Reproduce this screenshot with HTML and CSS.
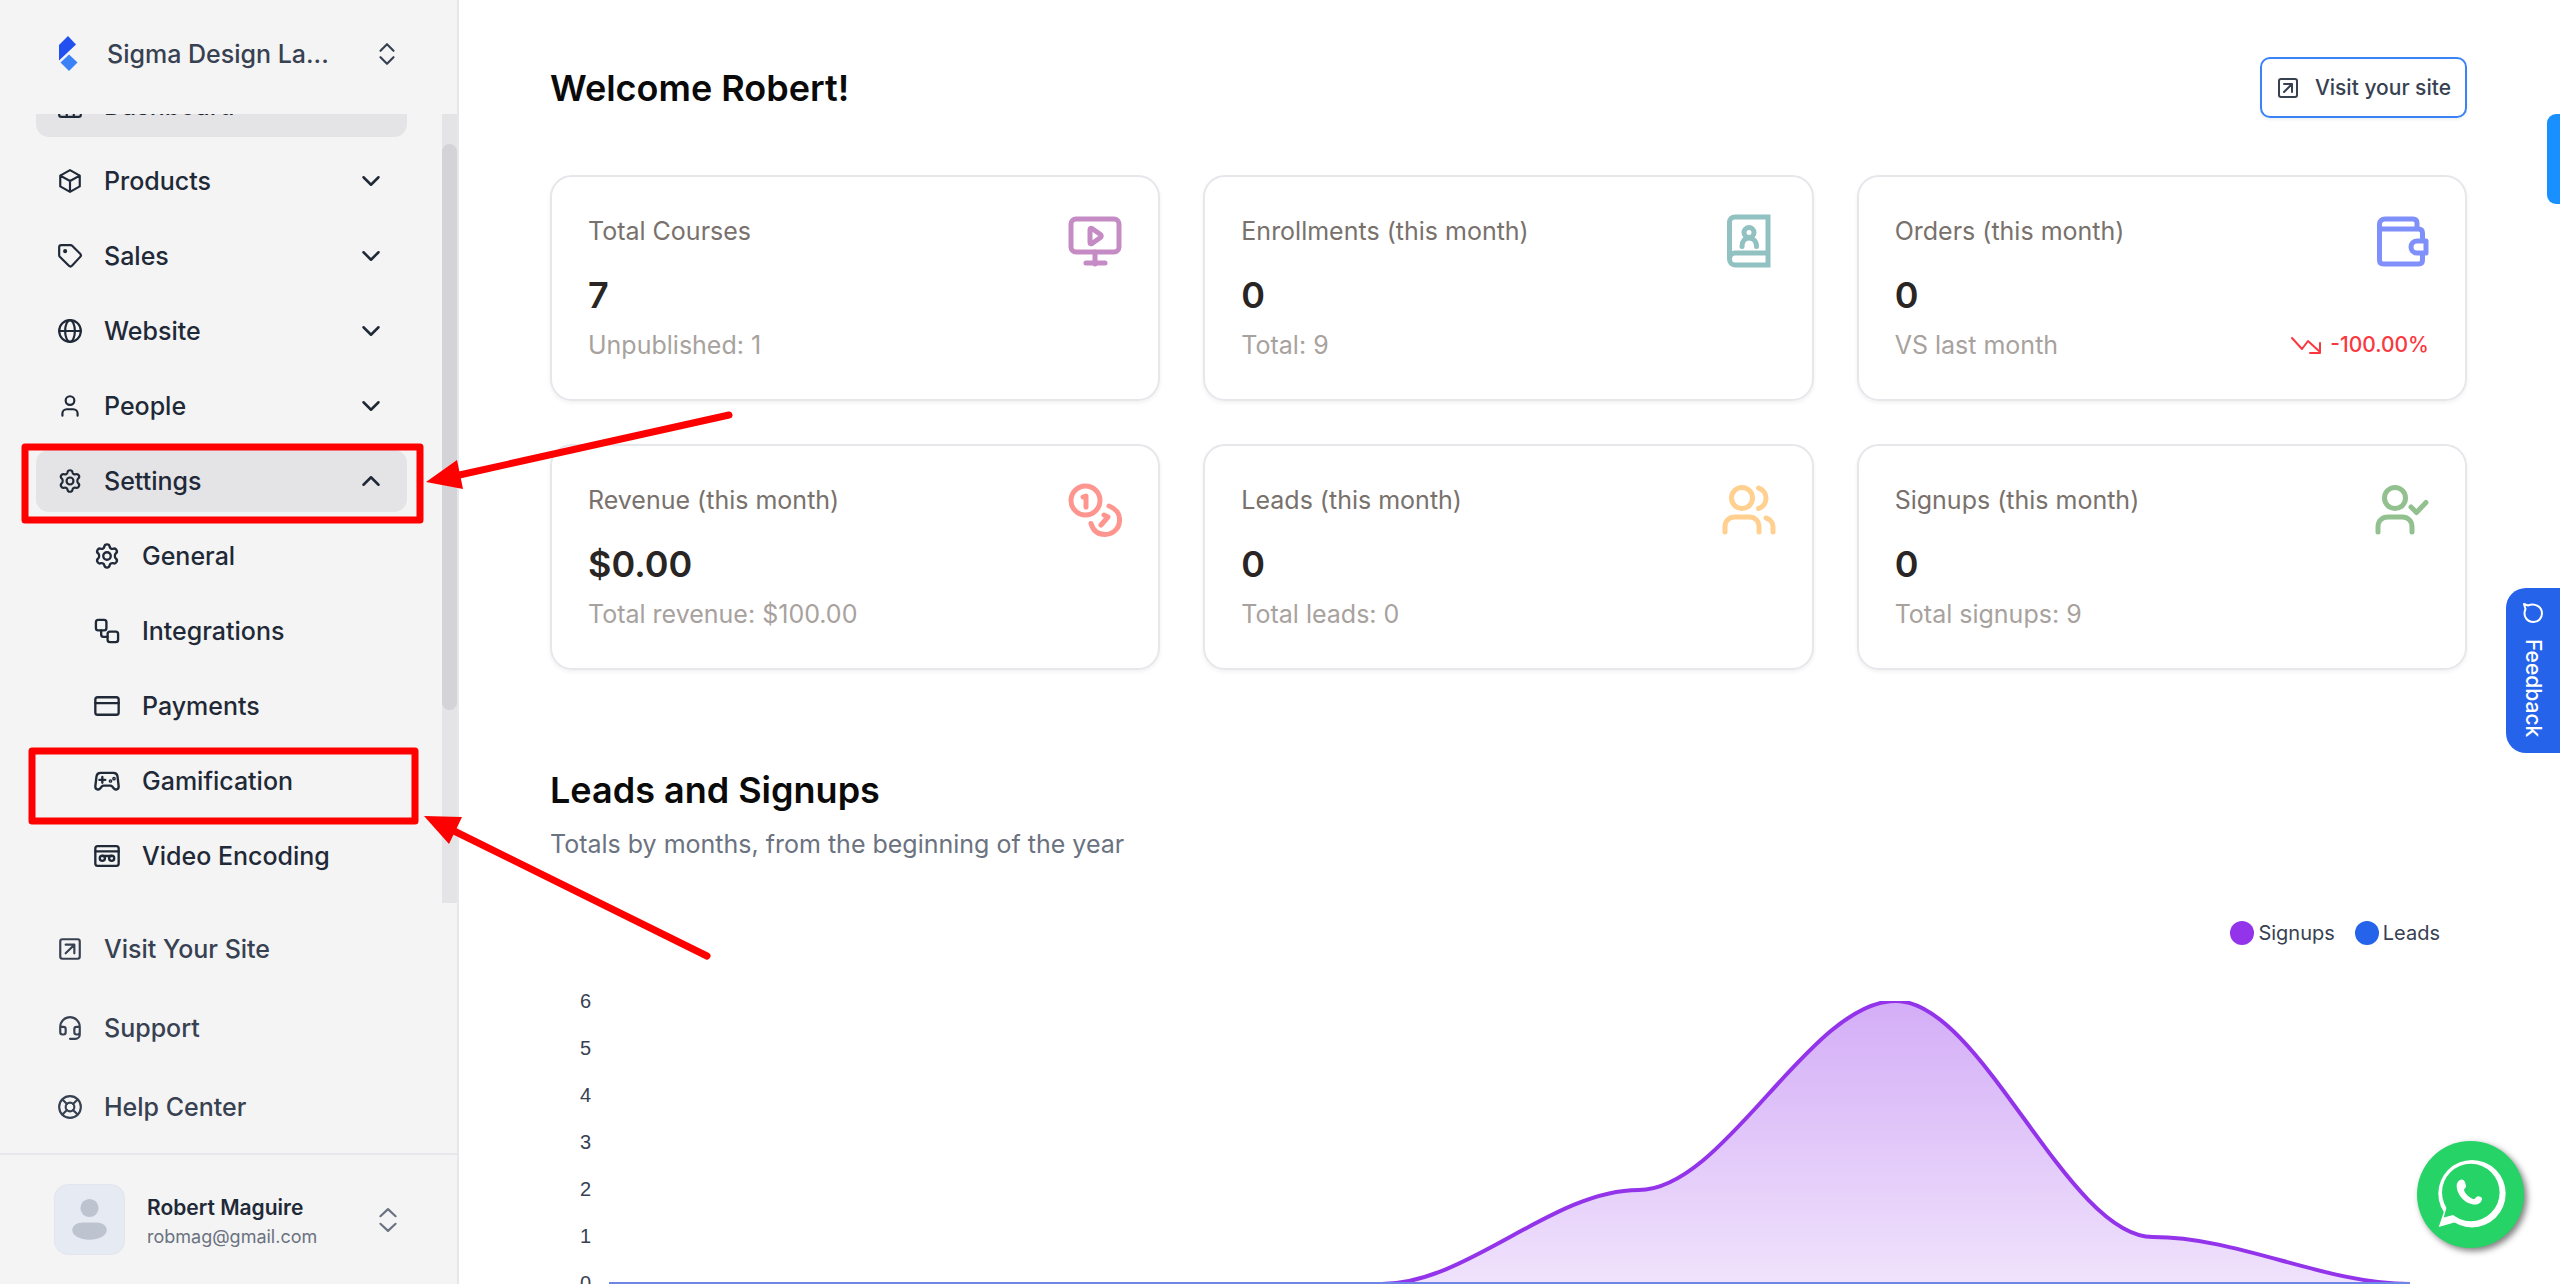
FILE: index.html
```
<!DOCTYPE html>
<html lang="en">
<head>
    <meta charset="UTF-8">
    <meta name="viewport" content="width=device-width, initial-scale=1.0">
    <title>Dashboard</title>
    <link rel="stylesheet" href="styles.css">
</head>
<body>
  <aside class="sidebar">
    <button class="workspace" type="button">
      <svg class="logo" viewBox="0 0 20 36">
        <path fill="#2250f0" d="M10 0l8 8.500L1 24.500V9z"/>
        <path fill="#3b82f6" d="M11 18.500l8.500 8L11 35l-8.500-8.500z"/>
      </svg>
      <span class="workspace-name">Sigma Design La...</span>
      <svg class="icon" viewBox="0 0 24 24"><path d="M6 9l6-6 6 6M6 15l6 6 6-6"/></svg>
    </button>

    <nav class="nav">
      <ul class="menu">
        <li><a class="item active" href="#">
          <svg class="icon" viewBox="0 0 24 24"><rect x="2" y="3" width="20" height="19" rx="2"/><path d="M2 9h20M9 9v13M15.500 9v13"/></svg>
          <span>Dashboard</span></a></li>
        <li><button class="item" type="button">
          <svg class="icon" viewBox="0 0 24 24"><path d="M12 2l9 5v10l-9 5-9-5V7zM3 7l9 5 9-5M12 12v10"/></svg>
          <span>Products</span>
          <svg class="chevron" viewBox="0 0 24 24"><path d="M6 9l6 6 6-6"/></svg></button></li>
        <li><button class="item" type="button">
          <svg class="icon" viewBox="0 0 24 24"><path d="M4 2h8.500c.6 0 1.100.2 1.500.6l7.400 7.400c.8.8.8 2 0 2.800l-7.600 8.200c-.8.8-2 .8-2.800 0l-8.400-8.400c-.4-.4-.6-.9-.6-1.400V4c0-1.100.9-2 2-2z"/><circle cx="7.500" cy="7.500" r=".9" fill="currentColor"/></svg>
          <span>Sales</span>
          <svg class="chevron" viewBox="0 0 24 24"><path d="M6 9l6 6 6-6"/></svg></button></li>
        <li><button class="item" type="button">
          <svg class="icon" viewBox="0 0 24 24"><circle cx="12" cy="12" r="10"/><ellipse cx="12" cy="12" rx="4.500" ry="10"/><path d="M2 12h20"/></svg>
          <span>Website</span>
          <svg class="chevron" viewBox="0 0 24 24"><path d="M6 9l6 6 6-6"/></svg></button></li>
        <li><button class="item" type="button">
          <svg class="icon" viewBox="0 0 24 24"><circle cx="12" cy="7" r="4"/><path d="M5 21v-2a4 4 0 0 1 4-4h6a4 4 0 0 1 4 4v2"/></svg>
          <span>People</span>
          <svg class="chevron" viewBox="0 0 24 24"><path d="M6 9l6 6 6-6"/></svg></button></li>
        <li><button class="item active" type="button" aria-expanded="true">
          <svg class="icon" viewBox="0 0 24 24"><path d="M9.700 4.100c.3-2.700 4.300-2.700 4.600 0 .2 1.300 1.600 2.100 2.900 1.700 2.600-1 4.500 2.400 2.300 4-1 .8-1 3.400 0 4.200 2.200 1.700.3 5.200-2.300 4.200-1.300-.4-2.700.4-2.900 1.700-.3 2.700-4.300 2.700-4.600 0-.2-1.300-1.600-2.100-2.900-1.700-2.600 1-4.500-2.500-2.300-4.200 1-.8 1-3.400 0-4.200-2.200-1.600-.3-5 2.300-4 1.300.4 2.700-.4 2.900-1.700z"/><circle cx="12" cy="12" r="3.200"/></svg>
          <span>Settings</span>
          <svg class="chevron" viewBox="0 0 24 24"><path d="M6 15l6-6 6 6"/></svg></button></li>
        <li><a class="item sub" href="#">
          <svg class="icon" viewBox="0 0 24 24"><path d="M9.700 4.100c.3-2.700 4.300-2.700 4.600 0 .2 1.300 1.600 2.100 2.900 1.700 2.600-1 4.500 2.400 2.300 4-1 .8-1 3.400 0 4.200 2.200 1.700.3 5.200-2.300 4.200-1.300-.4-2.700.4-2.900 1.700-.3 2.700-4.300 2.700-4.600 0-.2-1.300-1.600-2.100-2.900-1.700-2.600 1-4.500-2.500-2.300-4.200 1-.8 1-3.400 0-4.200-2.200-1.600-.3-5 2.300-4 1.300.4 2.700-.4 2.900-1.700z"/><circle cx="12" cy="12" r="3.200"/></svg>
          <span>General</span></a></li>
        <li><a class="item sub" href="#">
          <svg class="icon" viewBox="0 0 24 24"><rect x="2.500" y="2.500" width="9" height="9" rx="2"/><rect x="12.500" y="12.500" width="9" height="9" rx="2"/><path d="M7 11.500V15a2 2 0 0 0 2 2h3.500"/></svg>
          <span>Integrations</span></a></li>
        <li><a class="item sub" href="#">
          <svg class="icon" viewBox="0 0 24 24"><rect x="2" y="4.500" width="20" height="15" rx="2"/><path d="M2 9.500h20"/></svg>
          <span>Payments</span></a></li>
        <li><a class="item sub" href="#">
          <svg class="icon" viewBox="0 0 24 24"><path d="M6.500 5h11c2 0 3.200 1 3.500 3l1 8.500c.2 3-3 3.600-4.500 1.500l-1-1.200c-.5-.6-1-.8-1.700-.8H9.200c-.7 0-1.200.2-1.700.8l-1 1.200C5 20.100 1.800 19.500 2 16.500L3 8c.3-2 1.500-3 3.500-3zM8 8.500v5M5.500 11h5"/><circle cx="15" cy="12" r=".6"/><circle cx="18" cy="10" r=".6"/></svg>
          <span>Gamification</span></a></li>
        <li><a class="item sub" href="#">
          <svg class="icon" viewBox="0 0 24 24"><rect x="2" y="3.500" width="20" height="17" rx="2"/><path d="M2 8h20M8 12h8"/><circle cx="8" cy="14" r="2.200"/><circle cx="16" cy="14" r="2.200"/></svg>
          <span>Video Encoding</span></a></li>
      </ul>
      <div class="track"><div class="thumb"></div></div>
    </nav>

    <ul class="links">
      <li><a class="item" href="#">
        <svg class="icon" viewBox="0 0 24 24"><rect x="3" y="3" width="18" height="18" rx="2"/><path d="M8 8h8v8M16 8l-8 8"/></svg>
        <span>Visit Your Site</span></a></li>
      <li><a class="item" href="#">
        <svg class="icon" viewBox="0 0 24 24"><path d="M3 11h3a2 2 0 0 1 2 2v3a2 2 0 0 1-2 2H5a2 2 0 0 1-2-2v-5a9 9 0 0 1 18 0v5a2 2 0 0 1-2 2h-1a2 2 0 0 1-2-2v-3a2 2 0 0 1 2-2h3M21 16v2a4 4 0 0 1-4 4h-5"/></svg>
        <span>Support</span></a></li>
      <li><a class="item" href="#">
        <svg class="icon" viewBox="0 0 24 24"><circle cx="12" cy="12" r="10"/><circle cx="12" cy="12" r="4"/><path d="M5 5l4.200 4.200M14.800 9.200L19 5M14.800 14.800L19 19M9.200 14.800L5 19"/></svg>
        <span>Help Center</span></a></li>
    </ul>

    <button class="user" type="button">
      <svg class="avatar" viewBox="0 0 72 72">
        <circle cx="36" cy="24" r="9.500"/>
        <path d="M29 39h14c6 0 11 3 11 8 0 6-8 10-18 10s-18-4-18-10c0-5 5-8 11-8z"/>
      </svg>
      <span class="user-text">
        <span class="user-name">Robert Maguire</span>
        <span class="user-mail">robmag@gmail.com</span>
      </span>
      <svg class="icon" viewBox="0 0 24 24"><path d="M5 8.500L12 2l7 6.500M5 15.500l7 6.500 7-6.500"/></svg>
    </button>
  </aside>

  <main class="main">
    <header class="top">
      <h1>Welcome Robert!</h1>
      <a class="visit" href="#">
        <svg class="icon" viewBox="0 0 24 24"><rect x="3" y="3" width="18" height="18" rx="2"/><path d="M8 8h8v8M16 8l-8 8"/></svg>
        <span>Visit your site</span>
      </a>
    </header>

    <section class="cards">
      <article class="card">
        <div class="card-top">
          <h2>Total Courses</h2>
          <svg class="big purple" viewBox="0 0 54 54"><rect x="3" y="5" width="48" height="33" rx="5"/><path d="M27 38v12M18 49h19M22 15.500v13c0 1.500 1 1.500 2 1l8.500-6c1-1 1-2 0-3l-8.500-6c-1-.5-2-.5-2 1z"/></svg>
        </div>
        <strong>7</strong>
        <p>Unpublished: 1</p>
      </article>
      <article class="card">
        <div class="card-top">
          <h2>Enrollments (this month)</h2>
          <svg class="big teal" viewBox="0 0 54 54"><path d="M46 3H13c-3 0-5.500 2-5.500 5v37c0 3.500 2.500 6 5.500 6h33zM46 39H13c-3 0-5.500 2.500-5.500 6"/><circle cx="27" cy="18.500" r="5"/><path d="M20 32.500c0-5.500 3-8.500 7-8.500s7.500 3 7.500 8.500"/></svg>
        </div>
        <strong>0</strong>
        <p>Total: 9</p>
      </article>
      <article class="card">
        <div class="card-top">
          <h2>Orders (this month)</h2>
          <svg class="big indigo" viewBox="0 0 54 54"><path d="M42 15V9c0-2.500-1.500-4-4-4H10C7 5 4.500 7 4.500 10v36c0 2.500 1.500 4 4 4h35c2.500 0 4-1.500 4-4v-6M47.500 27v-8c0-2.500-1.500-4-4-4H5M51 27h-9c-8 0-8 12 0 12h9z"/></svg>
        </div>
        <strong>0</strong>
        <div class="card-foot">
          <p>VS last month</p>
          <span class="trend">
            <svg viewBox="0 0 30 18"><path d="M1 2l10 11 6-8 12 11M19 17h10V7"/></svg>
            -100.00%
          </span>
        </div>
      </article>
      <article class="card">
        <div class="card-top">
          <h2>Revenue (this month)</h2>
          <svg class="big coral" viewBox="0 0 54 54"><circle cx="17.500" cy="17.500" r="14.500"/><path d="M41 23c7 2.500 11 8 10.500 15-.5 8-7 13.500-14.500 13.500-7 0-12-4-14-11M15 14l3-1v11M36 32l4 2-7 8"/></svg>
        </div>
        <strong>$0.00</strong>
        <p>Total revenue: $100.00</p>
      </article>
      <article class="card">
        <div class="card-top">
          <h2>Leads (this month)</h2>
          <svg class="big orange" viewBox="0 0 54 54"><circle cx="20" cy="15" r="10.500"/><path d="M3 49v-5c0-6 4-10 10-10h14c6 0 10 4 10 10v5M36.500 5c10 3 10 17.500 0 20.500M44 35c4 1 7 4.500 7 9v5"/></svg>
        </div>
        <strong>0</strong>
        <p>Total leads: 0</p>
      </article>
      <article class="card">
        <div class="card-top">
          <h2>Signups (this month)</h2>
          <svg class="big green" viewBox="0 0 54 54"><circle cx="20" cy="15" r="10.500"/><path d="M3 49v-5c0-6 4-10 10-10h14c6 0 10 4 10 10v5M36 24l5.500 5.500L51 19.500"/></svg>
        </div>
        <strong>0</strong>
        <p>Total signups: 9</p>
      </article>
    </section>

    <section class="report">
      <h2>Leads and Signups</h2>
      <p>Totals by months, from the beginning of the year</p>
      <div class="legend">
        <span class="key signups">Signups</span>
        <span class="key leads">Leads</span>
      </div>
      <div class="chart">
        <div class="axis">
          <span>6</span><span>5</span><span>4</span><span>3</span><span>2</span><span>1</span><span>0</span>
        </div>
        <svg class="plot" viewBox="0 0 1800 283" preserveAspectRatio="none">
          <defs>
            <linearGradient id="fade" x1="0" y1="0" x2="0" y2="1">
              <stop offset="0" stop-color="#9333ea" stop-opacity=".4"/>
              <stop offset="1" stop-color="#9333ea" stop-opacity=".14"/>
            </linearGradient>
          </defs>
          <path fill="url(#fade)" d="M772 283C858 283 943 189 1029 189C1115 189 1200 0 1286 0C1372 0 1457 236 1543 236C1629 236 1714 283 1800 283z"/>
          <path class="line" stroke="#9333ea" d="M0 283H772C858 283 943 189 1029 189C1115 189 1200 0 1286 0C1372 0 1457 236 1543 236C1629 236 1714 283 1800 283"/>
          <path class="line" stroke="#6f86e6" d="M0 283H1800"/>
        </svg>
      </div>
    </section>
  </main>

  <button class="tab" type="button" aria-label="Open panel"></button>
  <button class="feedback" type="button">
    <svg viewBox="0 0 20 20"><path d="M1 1l4 1.500C12-.5 19 4 19 10.500 19 15 15.500 19 10.500 19 4 19-.5 13 2.500 6z"/></svg>
    <span>Feedback</span>
  </button>
  <a class="whatsapp" href="#" aria-label="WhatsApp">
    <svg viewBox="0 0 107 107">
      <circle cx="55" cy="52.700" r="33.700" fill="#fff"/>
      <path fill="#fff" d="M24 65l3.500 4L21.700 86l17.300-5 6-8z"/>
      <circle cx="53.800" cy="51.500" r="28.800" fill="#25d366"/>
      <path fill="#25d366" d="M29.700 66l-3 10.500L38 73.500z"/>
      <path fill="#fff" d="M45 38.500c-3 0-5.500 3-5.300 7 .3 9 9.500 18 18 18 4 0 7-2 7.300-5.500 0-2-2-2.600-4-2.800-2 0-2.500 3-4.500 3-4-1.500-8-5-9.500-9 0-2 2-2 2-4-.3-3-1.500-6.500-4-6.700z"/>
    </svg>
  </a>

  <!-- callouts over the menu -->
  <svg class="callouts" viewBox="0 0 760 1000" fill="none" stroke="#f00" stroke-width="7" stroke-linecap="round" stroke-linejoin="round">
    <rect x="25" y="447" width="395" height="73"/>
    <rect x="32" y="751" width="383" height="70"/>
    <path d="M729 415L455 476M707 956L450 829"/>
    <path fill="#f00" stroke="none" d="M426 482l31-22 6 29zM424 816l38 1-13 27z"/>
  </svg>
</body>
</html>
```
FILE: styles.css
```
* {
  box-sizing: border-box;
}

body {
  margin: 0;
  height: 100vh;
  display: flex;
  overflow: hidden;
  background: #fff;
  font-family: Inter, "Liberation Sans", sans-serif;
  font-size: 25px;
  line-height: 36px;
  color: #1f2937;
}

h1, h2, p, ul {
  margin: 0;
  padding: 0;
}

ul {
  list-style: none;
}

button {
  border: none;
  background: none;
  padding: 0;
  font: inherit;
  color: inherit;
  text-align: left;
}

a {
  color: inherit;
  text-decoration: none;
}

svg {
  flex: none;
  fill: none;
  stroke-linecap: round;
  stroke-linejoin: round;
}

.icon {
  width: 26px;
  height: 26px;
  stroke: currentColor;
  stroke-width: 2;
}

/* sidebar */
.sidebar {
  width: 459px;
  flex: none;
  display: flex;
  flex-direction: column;
  background: #f4f4f4;
  border-right: 2px solid #e5e7eb;
  font-weight: 500;
}

.workspace {
  height: 114px;
  padding: 0 57px 7px 58px;
  display: flex;
  align-items: center;
  color: #374151;
}

.logo {
  width: 20px;
  height: 36px;
  stroke: none;
}

.workspace-name {
  flex: 1;
  padding-left: 29px;
}

.nav {
  flex: 1;
  min-height: 0;
  display: flex;
  overflow: hidden;
}

.menu {
  flex: 1;
  display: flex;
  flex-direction: column;
  gap: 13px;
  margin-top: -39px;
  padding: 0 35px 0 36px;
}

.item {
  width: 100%;
  height: 62px;
  display: flex;
  align-items: center;
  gap: 21px;
  padding: 0 21px;
  border-radius: 13px;
}

.item.active {
  background: #e4e4e6;
}

.item.sub {
  padding-left: 57px;
}

.sub .icon {
  width: 28px;
  height: 28px;
}

.chevron {
  width: 30px;
  height: 30px;
  margin-left: auto;
  stroke: currentColor;
  stroke-width: 2;
}

.track {
  width: 15px;
  padding-top: 30px;
  background: #e4e4e6;
}

.thumb {
  height: 566px;
  border-radius: 8px;
  background: #d3d3d8;
}

.links {
  display: flex;
  flex-direction: column;
  gap: 17px;
  padding: 15px 50px 15px 36px;
  color: #374151;
}

.user {
  height: 131px;
  display: flex;
  align-items: center;
  gap: 22px;
  padding: 0 56px 0 54px;
  border-top: 2px solid #e5e7eb;
  color: #6b7280;
}

.avatar {
  width: 71px;
  height: 71px;
  border-radius: 14px;
  border: 1px solid #e2e5ec;
  background: #e6eaf3;
  fill: #bdc3cf;
}

.user-text {
  flex: 1;
  display: flex;
  flex-direction: column;
  padding-top: 4px;
  line-height: 29px;
}

.user-name {
  font-size: 21px;
  font-weight: 600;
  color: #1f2937;
}

.user-mail {
  font-size: 18px;
  font-weight: 400;
}

/* main column */
.main {
  flex: 1;
  min-width: 0;
  padding: 57px 93px 0 91px;
}

.top {
  display: flex;
  align-items: center;
  justify-content: space-between;
}

h1, .report h2 {
  font-size: 36px;
  line-height: 48px;
  font-weight: 600;
  color: #0a0a0a;
}

.visit {
  height: 61px;
  display: flex;
  align-items: center;
  gap: 15px;
  padding: 0 14px;
  border: 2px solid #3b82f6;
  border-radius: 10px;
  box-shadow: 0 2px 3px rgba(0, 0, 0, .06);
  font-size: 21px;
  font-weight: 500;
  color: #374151;
}

.visit .icon {
  width: 24px;
  height: 24px;
}

.cards {
  display: grid;
  grid-template-columns: repeat(3, 1fr);
  gap: 43px;
  margin-top: 57px;
}

.card {
  padding: 36px;
  border: 2px solid #e5e7eb;
  border-radius: 22px;
  box-shadow: 0 2px 4px rgba(0, 0, 0, .06);
}

.card-top {
  height: 62px;
  display: flex;
  justify-content: space-between;
}

.card h2 {
  font-size: 25px;
  font-weight: 400;
  color: #78716c;
}

.card strong {
  display: block;
  margin-bottom: 12px;
  font-size: 36px;
  line-height: 40px;
  font-weight: 600;
  color: #292524;
}

.card p {
  color: #a8a29e;
}

.card-foot {
  display: flex;
  justify-content: space-between;
}

.big {
  width: 54px;
  height: 54px;
  margin-top: 1px;
  stroke-width: 5;
}

.purple { stroke: #c58bc4; }
.teal { stroke: #92c1c1; stroke-linejoin: miter; }
.indigo { stroke: #8090fb; }
.coral { stroke: #ff958f; }
.orange { stroke: #ffd08f; }
.green { stroke: #92c18f; }

.trend {
  display: flex;
  align-items: center;
  gap: 9px;
  font-size: 21px;
  font-weight: 500;
  color: #fb3840;
}

.trend svg {
  width: 30px;
  height: 18px;
  stroke: currentColor;
  stroke-width: 2;
}

.report {
  margin-top: 96px;
}

.report > p {
  margin-top: 12px;
  color: #6b7280;
}

.legend {
  display: flex;
  justify-content: flex-end;
  gap: 20px;
  margin-top: 53px;
  padding-right: 27px;
  font-size: 20px;
  color: #374151;
}

.key {
  display: flex;
  align-items: center;
  gap: 4px;
}

.key::before {
  content: '';
  width: 24px;
  height: 24px;
  border-radius: 50%;
}

.signups::before { background: #9333ea; }
.leads::before { background: #2563eb; }

.chart {
  display: flex;
  gap: 18px;
  margin-top: 50px;
  padding-right: 57px;
}

/* seven rows centred on the grid values, top row sits on the plot edge */
.axis {
  width: 41px;
  height: 330px;
  display: flex;
  flex-direction: column;
  margin-top: -24px;
  font-family: "Liberation Sans", Arial, sans-serif;
  font-size: 20px;
  text-align: right;
  color: #374151;
}

.axis span {
  flex: 1;
  display: flex;
  align-items: center;
  justify-content: flex-end;
}

.plot {
  flex: 1;
  min-width: 0;
  height: 283px;
}

.line {
  stroke-width: 4;
  vector-effect: non-scaling-stroke;
}

/* floating buttons */
.tab {
  position: fixed;
  top: 114px;
  right: 0;
  width: 13px;
  height: 90px;
  border-radius: 9px 0 0 9px;
  background: #1890ff;
}

.feedback {
  position: fixed;
  top: 588px;
  right: 0;
  width: 54px;
  height: 165px;
  display: flex;
  flex-direction: column;
  align-items: center;
  gap: 16px;
  padding: 15px 0;
  border-radius: 20px 0 0 20px;
  background: #2563eb;
  color: #fff;
  font-size: 21px;
  font-weight: 500;
}

.feedback svg {
  width: 20px;
  height: 20px;
  stroke: #fff;
  stroke-width: 2;
}

.feedback span {
  writing-mode: vertical-rl;
}

.whatsapp {
  position: fixed;
  right: 36px;
  bottom: 36px;
  width: 107px;
  height: 107px;
  border-radius: 50%;
  background: #25d366;
  box-shadow: 3px 3px 6px rgba(0, 0, 0, .5);
}

.callouts {
  position: absolute;
  top: 0;
  left: 0;
  width: 760px;
  height: 1000px;
  pointer-events: none;
}
```
